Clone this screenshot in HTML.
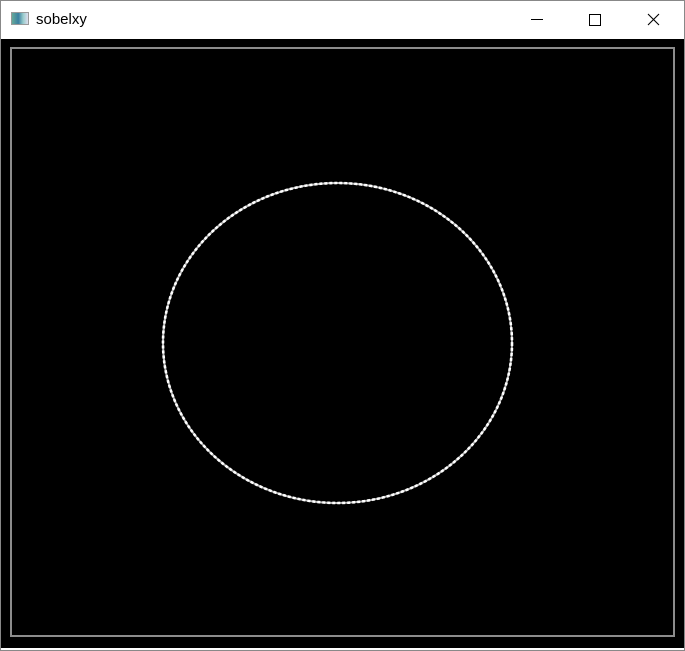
<!DOCTYPE html>
<html><head><style>
html,body{margin:0;padding:0;width:685px;height:651px;overflow:hidden;background:#fff}
.win{position:absolute;left:0;top:0;width:683px;height:649px;border:1px solid #888;background:#fff}
.title{position:absolute;left:36px;top:11px;font:15px "Liberation Sans",sans-serif;color:#000}
.icon{position:absolute;left:11px;top:12px;width:18px;height:13px;background:linear-gradient(90deg,#6a9 0,#3a7fa0 40%,#9cc 70%,#dde 100%);border:1px solid #999;box-sizing:border-box}
.img{position:absolute;left:1px;top:39px;width:683px;height:609px;background:#000}
</style></head><body>
<div class="win"></div>
<div class="icon"></div>
<div class="title">sobelxy</div>
<svg style="position:absolute;left:0;top:0" width="685" height="40">
<line x1="531" y1="19.5" x2="543" y2="19.5" stroke="#000" stroke-width="1"/>
<rect x="589.5" y="14.5" width="11" height="11" fill="none" stroke="#000" stroke-width="1"/>
<path d="M648 14 L659 25 M659 14 L648 25" stroke="#000" stroke-width="1.1"/>
</svg>
<div class="img"></div>
<svg style="position:absolute;left:0;top:0" width="685" height="651">
<rect x="11" y="48" width="663" height="588" fill="none" stroke="#8c8c8c" stroke-width="2"/>
<ellipse cx="337.5" cy="343" rx="174.5" ry="160" fill="none" stroke="#bbb" stroke-width="2"/>
<ellipse cx="337.5" cy="343" rx="174.5" ry="160" fill="none" stroke="#fff" stroke-width="2.6" stroke-dasharray="3 2"/>
</svg>
</body></html>
